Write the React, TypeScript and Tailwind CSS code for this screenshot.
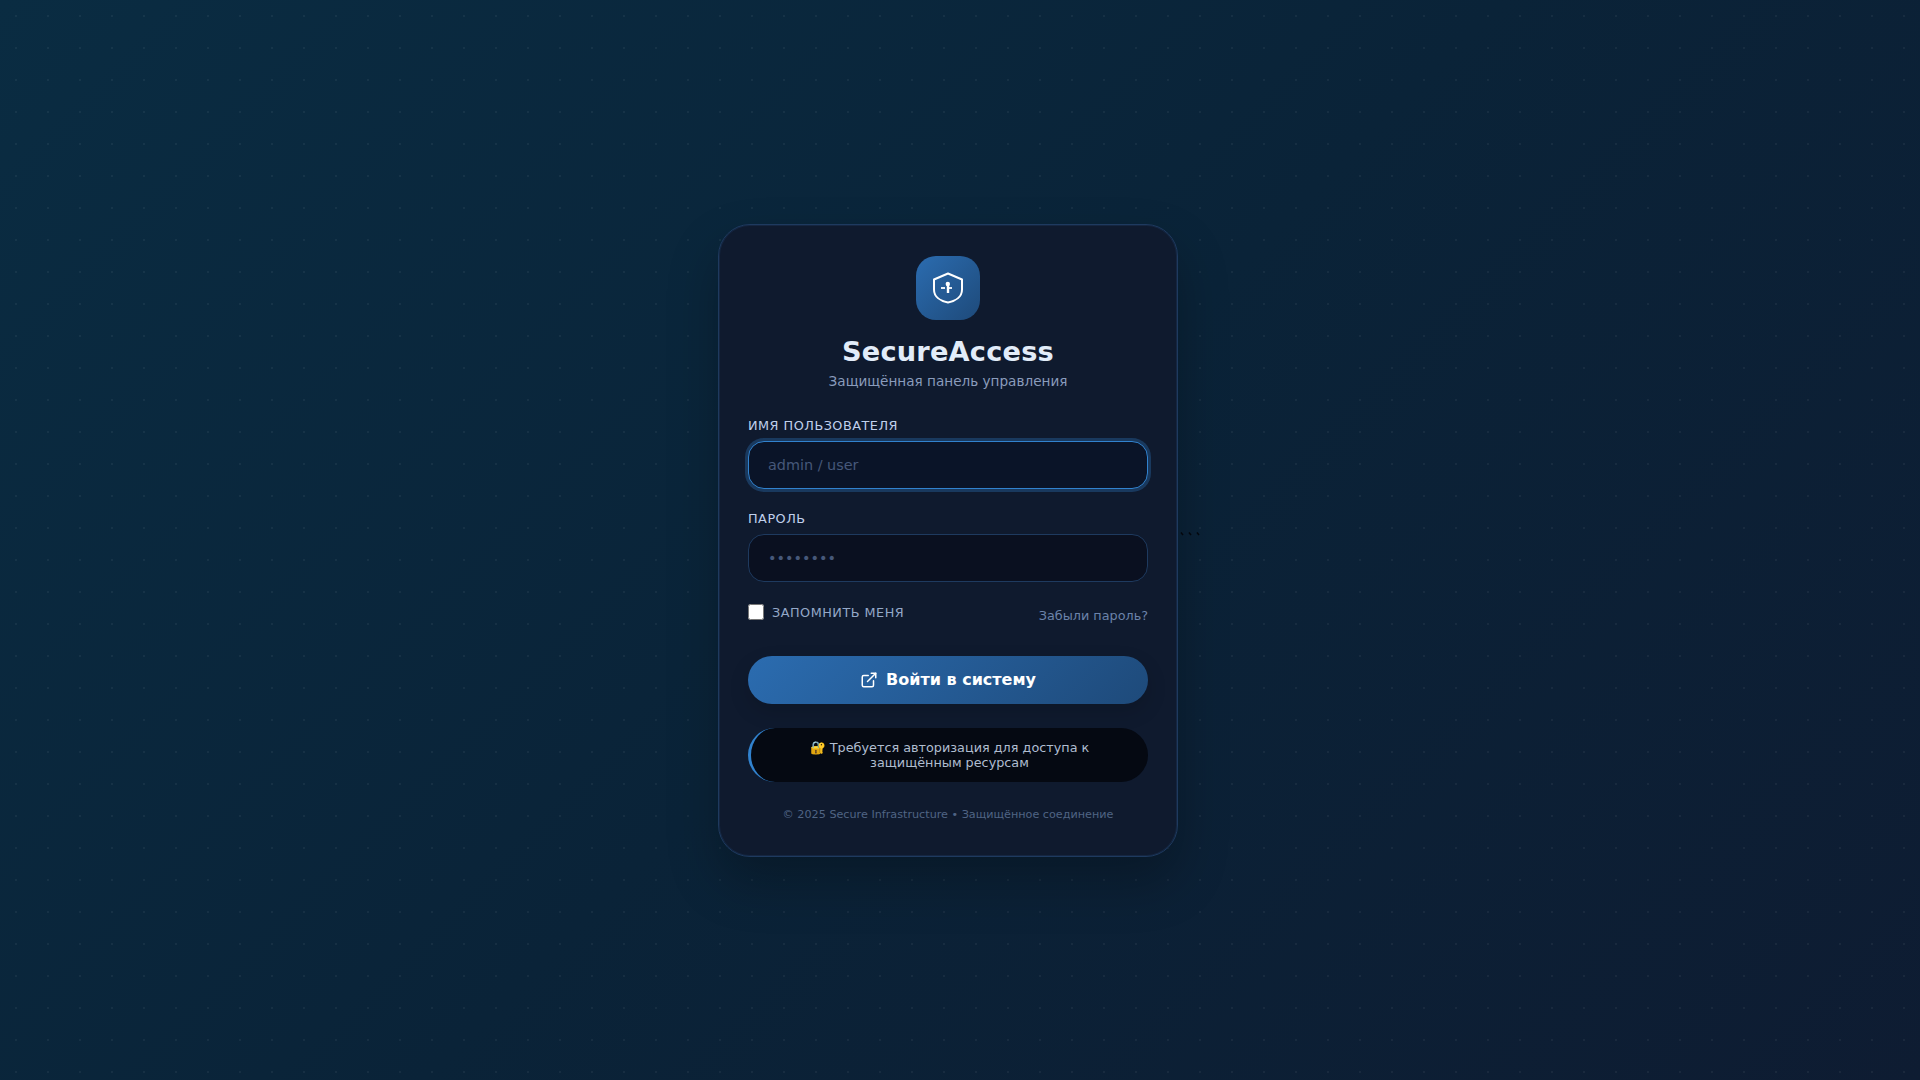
import { ExternalLink } from 'lucide-react'

const font = { fontFamily: '"DejaVu Sans", sans-serif' }

const ShieldIcon = () => (
    <svg width="32" height="32" viewBox="0 0 32 32" fill="none" stroke="#fff" strokeWidth="2" strokeLinejoin="round" strokeLinecap="round">
        <path d="M16 1.5 L30 7.5 V17.5 C30 24.5 24 29 16 30.5 C8 29 2 24.5 2 17.5 V7.5 Z" />
        <circle cx="15.8" cy="12" r="2.2" fill="#fff" stroke="none" />
        <path d="M16 13 V21" strokeWidth="2.4" strokeLinecap="butt" />
        <path d="M9 16 H13" strokeWidth="1.8" strokeLinecap="butt" />
        <path d="M16 16 H20" strokeWidth="1.8" strokeLinecap="butt" />
    </svg>
)

const App = () => {
    return (
        <div
            style={font}
            className="min-h-screen flex items-center justify-center bg-[radial-gradient(circle,rgba(255,255,255,0.05)_1px,transparent_1.5px),linear-gradient(135deg,#0a2c42_0%,#0a2338_50%,#0e1c32_100%)] bg-[length:32px_32px,100%_100%]"
        >
            <div className="w-[460px] rounded-[32px] border border-[#1e3a5f] bg-[#0f1a2e] px-[29px] pt-[31px] pb-[34px] shadow-[inset_0_0_0_1px_rgba(30,58,95,0.4),0_25px_50px_rgba(0,0,0,0.25)]">
                <div className="flex flex-col items-center">
                    <div className="w-16 h-16 rounded-[20px] bg-[linear-gradient(135deg,#2b6cb0,#1e4a7a)] flex items-center justify-center">
                        <ShieldIcon />
                    </div>
                    <h1 className="mt-[15px] text-[27.2px] leading-[34px] tracking-[0.2px] font-bold text-[#e2ecf9]">SecureAccess</h1>
                    <p className="mt-[2px] text-[13.6px] leading-[20px] text-[#8a9cbc]">Защищённая панель управления</p>
                </div>

                <form className="mt-[27px]">
                    <label className="block mb-[8px] text-[12.8px] leading-[15px] uppercase tracking-[0.5px] text-[#c0d0ec]">Имя пользователя</label>
                    <input
                        type="text"
                        placeholder="admin / user"
                        className="block w-full h-[48px] px-[19px] rounded-[16px] border border-[#3182ce] ring-[3px] ring-[#3182ce]/30 bg-[#0a1428] text-[14.4px] outline-none placeholder:text-[#46587a]"
                    />

                    <label className="block mt-[22px] mb-[8px] text-[12.8px] leading-[15px] uppercase tracking-[0.5px] text-[#c0d0ec]">Пароль</label>
                    <input
                        type="password"
                        placeholder="••••••••"
                        className="block w-full h-[48px] px-[19px] rounded-[16px] border border-[#1e3a5f] bg-[#0a1020] text-[14.4px] outline-none placeholder:text-[#46587a]"
                    />

                    <div className="mt-[22px] flex items-start justify-between">
                        <label className="flex items-center gap-[8px] text-[12.8px] leading-[16px] uppercase tracking-[0.5px] text-[#94a8c8]">
                            <input type="checkbox" className="w-4 h-4 m-0 mb-[2px]" />
                            Запомнить меня
                        </label>
                        <a className="mt-[4px] text-[12.8px] leading-[16px] text-[#6b83aa]">Забыли пароль?</a>
                    </div>

                    <button
                        type="button"
                        className="mt-[32px] w-full h-[48px] rounded-full bg-[linear-gradient(135deg,#2b6cb0,#1e4a7a)] flex items-center justify-center gap-[8px] text-[16px] font-bold text-white shadow-[0_8px_20px_rgba(0,0,0,0.15)]"
                    >
                        <ExternalLink size={18} strokeWidth={2} />
                        Войти в систему
                    </button>
                </form>

                <div className="mt-[24px] h-[54px] rounded-[40px] border-l-[3px] border-[#3182ce] bg-[#050912] flex items-center justify-center px-[40px] text-center text-[12.8px] leading-[15px] text-[#b0bdd0]">
                    🔐 Требуется авторизация для доступа к защищённым ресурсам
                </div>

                <p className="mt-[26px] text-center text-[11.2px] leading-[14px] text-[#4f6484]">© 2025 Secure Infrastructure • Защищённое соединение</p>
            </div>
            <div className="w-[24px] h-[4px] mb-[12px] flex items-center justify-around text-[#04060c]">
                <svg width="24" height="4" viewBox="0 0 24 4" fill="none" stroke="currentColor" strokeWidth="1.4">
                    <path d="M3 0.5 L5 3" />
                    <path d="M11 0.5 L13 3" />
                    <path d="M19 0.5 L21 3" />
                </svg>
            </div>
        </div>
    )
}

export default App
